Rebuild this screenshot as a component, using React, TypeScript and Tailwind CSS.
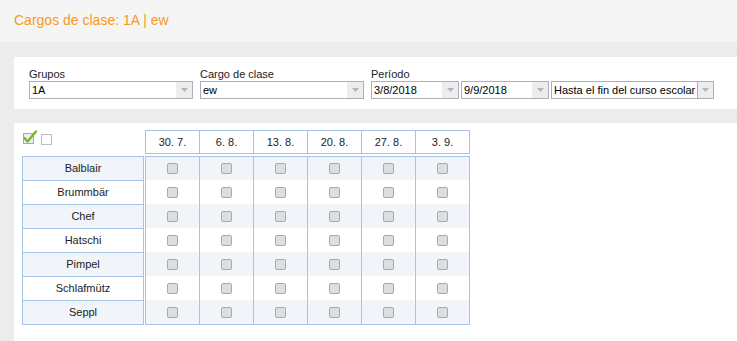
import React from "react";

const dates = ["30. 7.", "6. 8.", "13. 8.", "20. 8.", "27. 8.", "3. 9."];
const people = ["Balblair", "Brummbär", "Chef", "Hatschi", "Pimpel", "Schlafmütz", "Seppl"];

function Arrow() {
    return (
        <svg width="7" height="4" viewBox="0 0 7 4">
            <path d="M0 0 L7 0 L3.5 4 Z" fill="#a9b6c8" />
        </svg>
    );
}

type SelectBoxProps = {
    value: string;
    width: string;
    split?: boolean;
};

function SelectBox({ value, width, split }: SelectBoxProps) {
    return (
        <div className={`${width} flex h-[18px] border border-[#abb1bc] bg-white`}>
            <div className="flex-1 overflow-hidden whitespace-nowrap pl-[2px] text-[11px] leading-[16px] text-black">
                {value}
            </div>
            <div
                className={`flex w-[16px] shrink-0 items-center justify-center bg-[#ededed] ${
                    split ? "border-l border-[#abb1bc]" : ""
                }`}
            >
                <Arrow />
            </div>
        </div>
    );
}

function Tick() {
    return <div className="h-[11px] w-[11px] rounded-[2px] border border-[#a9a9a9] bg-[#dedede]" />;
}

function CheckAllIcon() {
    return (
        <svg width="14" height="14" viewBox="0 0 14 14">
            <rect x="0.5" y="3.5" width="10" height="10" fill="#eeeeee" stroke="#a9a9a9" />
            <path d="M1.5 8 L4.5 11.5 L13 1.5" fill="none" stroke="#78b52a" strokeWidth="2.4" strokeLinecap="round" strokeLinejoin="round" />
        </svg>
    );
}

export default function App() {
    return (
        <div className="flex h-[341px] flex-col overflow-hidden bg-[#ececec] [font-family:'Liberation_Sans',Arial,sans-serif] text-[11px] text-[#222]">
            <div className="h-[42px] shrink-0 bg-[#f5f5f5] pl-[14px] pt-[12px] text-[14px] leading-[17px] text-[#f8991d]">
                Cargos de clase: 1A | ew
            </div>

            <div className="ml-[14px] mt-[15px] flex h-[52px] shrink-0 gap-[7px] bg-white pl-[15px] pt-[10px]">
                <div>
                    <div className="h-[14px] leading-[14px]">Grupos</div>
                    <SelectBox value="1A" width="w-[164px]" />
                </div>
                <div>
                    <div className="h-[14px] leading-[14px]">Cargo de clase</div>
                    <SelectBox value="ew" width="w-[164px]" />
                </div>
                <div>
                    <div className="h-[14px] leading-[14px]">Período</div>
                    <div className="flex gap-[2px]">
                        <SelectBox value="3/8/2018" width="w-[88px]" />
                        <SelectBox value="9/9/2018" width="w-[88px]" />
                        <SelectBox value="Hasta el fin del curso escolar" width="w-[163px]" split />
                    </div>
                </div>
            </div>

            <div className="ml-[14px] mt-[14px] flex-1 bg-white pl-[8px] pt-[7px]">
                <div className="grid grid-cols-[122px_325px] gap-x-[1px] gap-y-[2px]">
                    <div className="flex items-start gap-[4px] pl-[1px]">
                        <CheckAllIcon />
                        <div className="mt-[4px] h-[11px] w-[11px] border border-[#bdbdbd] bg-white" />
                    </div>
                    <div className="flex h-[24px] border border-[#a4c4ea]">
                        {dates.map((d, i) => (
                            <div
                                key={d}
                                className={`flex items-center justify-center ${
                                    i > 0 ? "w-[54px] border-l border-[#a4c4ea]" : "w-[53px]"
                                }`}
                            >
                                {d}
                            </div>
                        ))}
                    </div>

                    <div className="border border-[#a4c4ea]">
                        {people.map((p, i) => (
                            <div
                                key={p}
                                className={`flex items-center justify-center ${
                                    i > 0 ? "h-[24px] border-t border-[#a4c4ea]" : "h-[23px]"
                                } ${i % 2 === 0 ? "bg-[#f1f5fa]" : "bg-white"}`}
                            >
                                {p}
                            </div>
                        ))}
                    </div>
                    <div className="border border-[#a4c4ea]">
                        {people.map((p, i) => (
                            <div
                                key={p}
                                className={`flex ${i === 0 ? "h-[23px]" : "h-[24px]"} ${
                                    i % 2 === 0 ? "bg-[#f1f5fa]" : "bg-white"
                                }`}
                            >
                                {dates.map((d, j) => (
                                    <div
                                        key={d}
                                        className={`flex items-center justify-center ${
                                            j > 0 ? "w-[54px] border-l border-[#a4c4ea]" : "w-[53px]"
                                        }`}
                                    >
                                        <Tick />
                                    </div>
                                ))}
                            </div>
                        ))}
                    </div>
                </div>
            </div>
        </div>
    );
}
